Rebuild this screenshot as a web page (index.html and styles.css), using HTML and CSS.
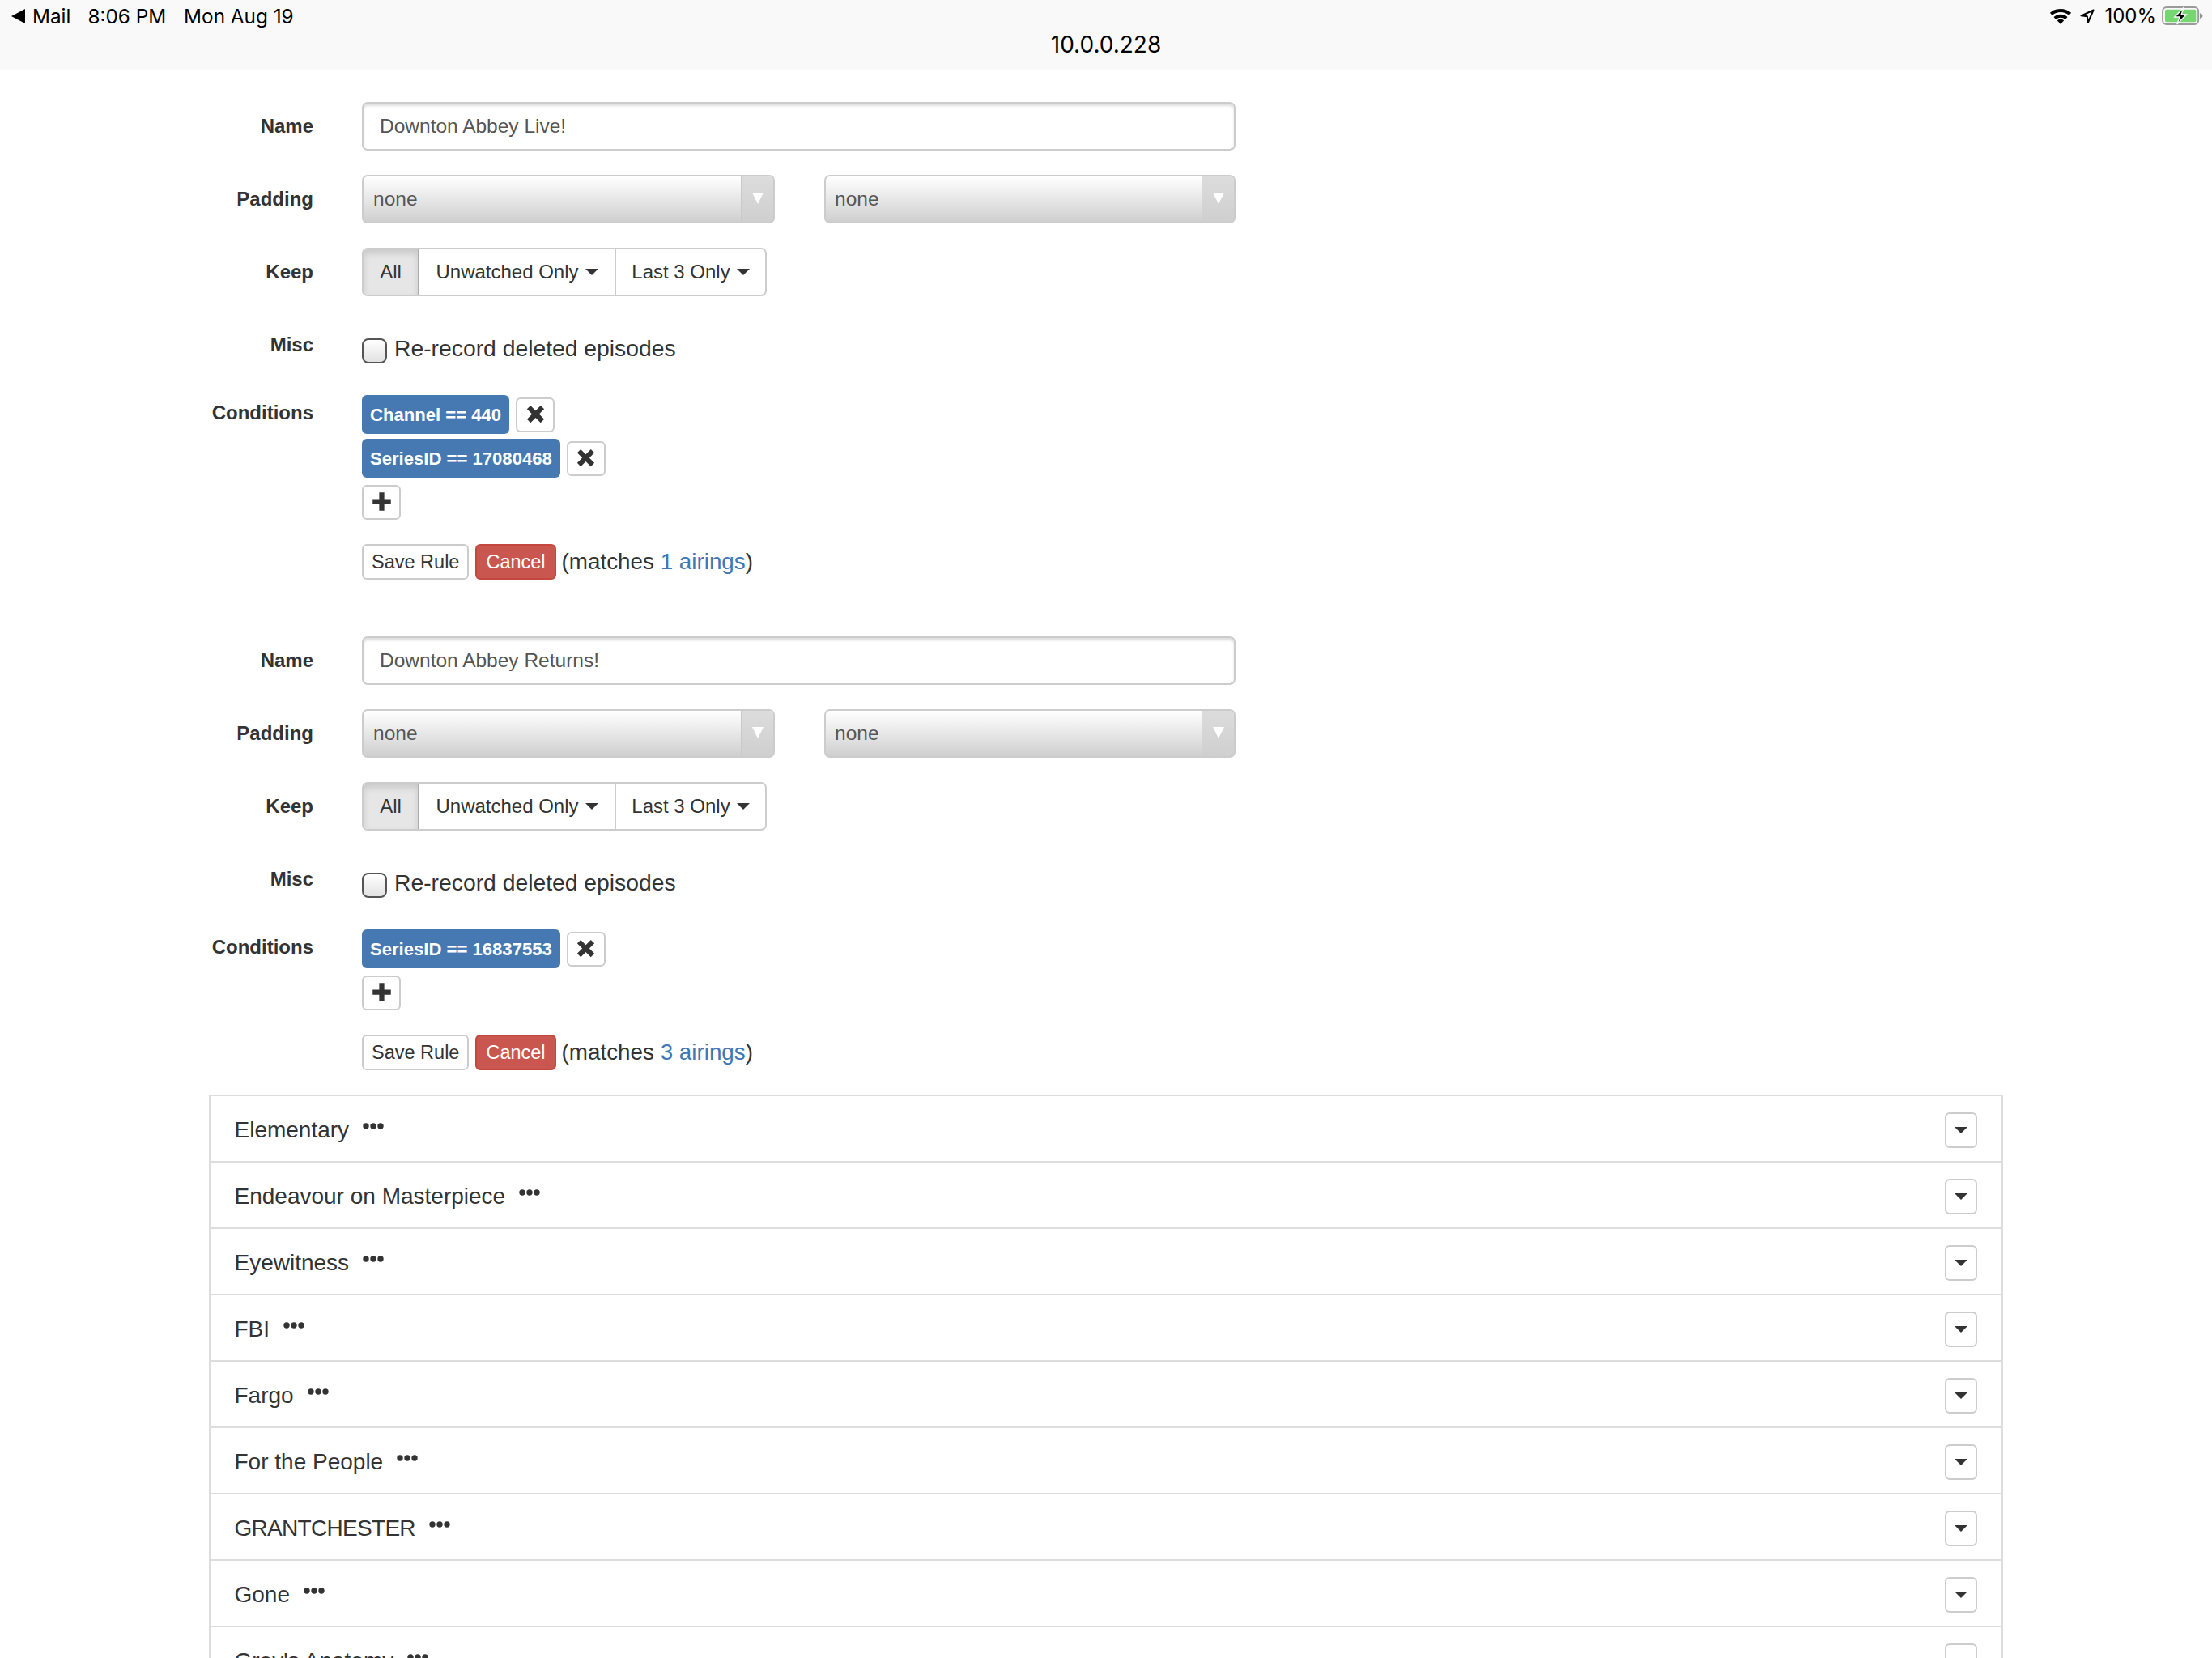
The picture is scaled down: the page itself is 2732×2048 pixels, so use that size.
FILE: index.html
```html
<!DOCTYPE html>
<html lang="en">
<head>
<meta charset="utf-8">
<title>10.0.0.228</title>
<link rel="stylesheet" href="styles.css">
</head>
<body>
<svg class="defs" aria-hidden="true">
  <symbol id="i-x" viewBox="0 0 20 20"><path d="M5 1.500 10 6.500 15 1.500 18.500 5 13.500 10 18.500 15 15 18.500 10 13.500 5 18.500 1.500 15 6.500 10 1.500 5Z"/></symbol>
  <symbol id="i-plus" viewBox="0 0 20 20"><path d="M7.500 1h5v6.500H19v5h-6.500V19h-5v-6.500H1v-5h6.500Z"/></symbol>
  <symbol id="i-dots" viewBox="0 0 26 8"><circle cx="4" cy="4" r="3.700"/><circle cx="13" cy="4" r="3.700"/><circle cx="22" cy="4" r="3.700"/></symbol>
</svg>
<header class="ios-bar">
  <div class="status">
    <div class="status-left">
      <svg class="back-tri" viewBox="0 0 17 18"><path d="M17 0V18L0 9Z"/></svg>
      <span class="mail">Mail</span>
      <span class="time">8:06 PM</span>
      <span>Mon Aug 19</span>
    </div>
    <div class="status-right">
      <svg class="wifi" viewBox="0 0 28 20"><path d="M14 20 9.800 15.200a6.500 6.500 0 0 1 8.400 0Z"/><path d="M6.800 12.500a11 11 0 0 1 14.400 0" class="arc"/><path d="M2.200 7.300a18 18 0 0 1 23.600 0" class="arc"/></svg>
      <svg class="loc" viewBox="0 0 18 18"><path d="M16.500 1.500 1.500 8.300 8.800 9.200 10 16.500Z"/></svg>
      <span class="pct">100%</span>
      <svg class="batt" viewBox="0 0 54 24"><rect x="1" y="1" width="46" height="22" rx="5" class="b-shell"/><rect x="4" y="4" width="40" height="16" rx="2" class="b-fill"/><path d="M49 8.500c2 .5 3.500 1.500 3.500 3.500s-1.500 3-3.500 3.500Z" class="b-nub"/><path d="M28.500 1 16.500 13.500H23L19.500 23 31.500 10.500H25Z" class="b-bolt"/></svg>
    </div>
  </div>
  <div class="address">10.0.0.228</div>
</header>
<main class="page">
  <form class="rule">
    <div class="group"><label class="lbl">Name</label><div class="field"><input class="text-input" type="text" value="Downton Abbey Live!"></div></div>
    <div class="group"><label class="lbl">Padding</label><div class="field selects">
      <div class="sel sel-a"><span>none</span><i class="sel-arrow"></i></div>
      <div class="sel sel-b"><span>none</span><i class="sel-arrow"></i></div>
    </div></div>
    <div class="group"><label class="lbl">Keep</label><div class="field">
      <div class="btn-group"><span class="seg seg-active">All</span><span class="seg seg-un">Unwatched Only<i class="caret"></i></span><span class="seg seg-last">Last 3 Only<i class="caret"></i></span></div>
    </div></div>
    <div class="group group-misc"><label class="lbl">Misc</label><div class="field misc"><span class="check"></span><span class="check-text">Re-record deleted episodes</span></div></div>
    <div class="group group-cond"><label class="lbl lbl-short">Conditions</label><div class="field cond">
      <div class="cond-row"><span class="chip">Channel == 440</span><span class="icon-btn"><svg class="gi"><use href="#i-x"/></svg></span></div>
      <div class="cond-row"><span class="chip">SeriesID == 17080468</span><span class="icon-btn"><svg class="gi"><use href="#i-x"/></svg></span></div>
      <div class="add-row"><span class="icon-btn"><svg class="gi"><use href="#i-plus"/></svg></span></div>
      <div class="actions"><span class="btn">Save Rule</span><span class="btn btn-danger">Cancel</span><span class="matches">(matches <a class="link">1 airings</a>)</span></div>
    </div></div>
  </form>
  <form class="rule rule-second">
    <div class="group"><label class="lbl">Name</label><div class="field"><input class="text-input" type="text" value="Downton Abbey Returns!"></div></div>
    <div class="group"><label class="lbl">Padding</label><div class="field selects">
      <div class="sel sel-a"><span>none</span><i class="sel-arrow"></i></div>
      <div class="sel sel-b"><span>none</span><i class="sel-arrow"></i></div>
    </div></div>
    <div class="group"><label class="lbl">Keep</label><div class="field">
      <div class="btn-group"><span class="seg seg-active">All</span><span class="seg seg-un">Unwatched Only<i class="caret"></i></span><span class="seg seg-last">Last 3 Only<i class="caret"></i></span></div>
    </div></div>
    <div class="group group-misc"><label class="lbl">Misc</label><div class="field misc"><span class="check"></span><span class="check-text">Re-record deleted episodes</span></div></div>
    <div class="group group-cond"><label class="lbl lbl-short">Conditions</label><div class="field cond">
      <div class="cond-row"><span class="chip">SeriesID == 16837553</span><span class="icon-btn"><svg class="gi"><use href="#i-x"/></svg></span></div>
      <div class="add-row"><span class="icon-btn"><svg class="gi"><use href="#i-plus"/></svg></span></div>
      <div class="actions"><span class="btn">Save Rule</span><span class="btn btn-danger">Cancel</span><span class="matches">(matches <a class="link">3 airings</a>)</span></div>
    </div></div>
  </form>
  <ul class="shows">
    <li class="show"><span>Elementary</span><svg class="dots"><use href="#i-dots"/></svg><span class="drop"><i class="caret caret-lg"></i></span></li>
    <li class="show"><span>Endeavour on Masterpiece</span><svg class="dots"><use href="#i-dots"/></svg><span class="drop"><i class="caret caret-lg"></i></span></li>
    <li class="show"><span>Eyewitness</span><svg class="dots"><use href="#i-dots"/></svg><span class="drop"><i class="caret caret-lg"></i></span></li>
    <li class="show"><span>FBI</span><svg class="dots"><use href="#i-dots"/></svg><span class="drop"><i class="caret caret-lg"></i></span></li>
    <li class="show"><span>Fargo</span><svg class="dots"><use href="#i-dots"/></svg><span class="drop"><i class="caret caret-lg"></i></span></li>
    <li class="show"><span>For the People</span><svg class="dots"><use href="#i-dots"/></svg><span class="drop"><i class="caret caret-lg"></i></span></li>
    <li class="show"><span class="caps">GRANTCHESTER</span><svg class="dots"><use href="#i-dots"/></svg><span class="drop"><i class="caret caret-lg"></i></span></li>
    <li class="show"><span>Gone</span><svg class="dots"><use href="#i-dots"/></svg><span class="drop"><i class="caret caret-lg"></i></span></li>
    <li class="show"><span>Grey's Anatomy</span><svg class="dots"><use href="#i-dots"/></svg><span class="drop"><i class="caret caret-lg"></i></span></li>
  </ul>
</main>
</body>
</html>
```
FILE: styles.css
```css
* { box-sizing: border-box; }
html, body { margin: 0; height: 2048px; overflow: hidden; background: #fff; }
body { font-family: "Liberation Sans", Arial, sans-serif; font-size: 24px; color: #333; }
.defs { display: none; }

.ios-bar { height: 87px; background: #f9f9f9; border-bottom: 1px solid #b9b9b9; color: #000; }
.status { height: 39px; display: flex; justify-content: space-between; align-items: center; padding: 0 10px 0 14px; font-family: Inter, "Liberation Sans", sans-serif; font-size: 24.300px; }
.status-left { display: flex; align-items: center; }
.back-tri { width: 17px; height: 18px; fill: #000; margin-right: 9px; }
.mail { margin-right: 21px; }
.time { margin-right: 22px; }
.status-right { display: flex; align-items: center; }
.wifi { width: 28px; height: 20px; margin-right: 10px; fill: #000; }
.wifi .arc { fill: none; stroke: #000; stroke-width: 4px; }
.loc { width: 18px; height: 18px; margin-right: 12px; fill: none; stroke: #000; stroke-width: 2px; stroke-linejoin: round; }
.pct { margin-right: 7px; font-size: 24px; }
.batt { width: 52px; height: 23px; }
.b-shell { fill: none; stroke: #9a9a9a; stroke-width: 2px; }
.b-fill { fill: #76d672; }
.b-nub { fill: #8e8e8e; }
.b-bolt { fill: #000; stroke: #f9f9f9; stroke-width: 1.500px; }
.address { text-align: center; font-size: 28px; line-height: 36px; margin-top: -2px; font-family: Inter, "Liberation Sans", sans-serif; }

.page { width: 2216px; margin: -1px 0 0 258px; border-top: 1px solid #999; padding-top: 39px; }
.rule-second { margin-top: 70px; }
.group { display: flex; margin-bottom: 30px; }
.group-cond { margin-bottom: 0; }
.group-misc { height: 62px; }
.lbl { width: 129px; margin-right: 60px; text-align: right; font-weight: 700; line-height: 60px; font-size: 24px; white-space: nowrap; flex: none; }
.lbl-short { line-height: 44px; }
.field { flex: none; width: 1079px; }

.text-input { display: block; width: 100%; height: 60px; padding: 0 20px; border: 2px solid #ccc; border-radius: 7px; font: 24.500px "Liberation Sans", Arial, sans-serif; color: #555; box-shadow: inset 0 3px 3px rgba(0,0,0,.13); outline: none; background: #fff; }

.selects { display: flex; justify-content: space-between; }
.sel { height: 60px; display: flex; align-items: center; justify-content: space-between; border: 2px solid #ccc; border-radius: 7px; background: linear-gradient(#fff, #cfcfcf); color: #555; font-size: 24.500px; padding-left: 12px; }
.sel-a { width: 510px; }
.sel-b { width: 508px; padding-left: 11px; }
.sel-arrow { width: 40px; align-self: stretch; display: flex; justify-content: center; align-items: center; border-left: 1px solid #c9c9c9; background: linear-gradient(#dcdcdc, #cfcfcf); border-radius: 0 5px 5px 0; padding-bottom: 3px; }
.sel-arrow::after { content: ""; border-left: 7px solid transparent; border-right: 7px solid transparent; border-top: 14px solid #fff; }

.btn-group { display: inline-flex; height: 60px; border: 2px solid #ccc; border-radius: 7px; font-size: 24px; overflow: hidden; }
.seg { display: flex; align-items: center; justify-content: center; border-left: 2px solid #ccc; }
.seg-active { width: 69px; border-left: 0; border-right: 2px solid #adadad; margin-right: -2px; background: #e6e6e6; box-shadow: inset 0 5px 8px rgba(0,0,0,.13); position: relative; }
.seg-un { width: 243px; }
.seg-last { width: 186px; }
.caret { width: 0; height: 0; margin-left: 8px; border-left: 8px solid transparent; border-right: 8px solid transparent; border-top: 8px solid #333; }

.misc { display: flex; align-items: flex-start; }
.check { width: 31px; height: 31px; margin-top: 22px; border: 2px solid #555; border-radius: 8px; background: linear-gradient(#fff, #e2e2e2); flex: none; }
.check-text { margin: 16px 0 0 9px; font-size: 28.300px; line-height: 36px; }

.cond-row { display: flex; align-items: center; gap: 8px; margin-bottom: 6px; }
.chip { height: 48px; padding: 1px 10px 0; display: flex; align-items: center; background: #4679b2; color: #fff; font-weight: 700; font-size: 22.100px; border-radius: 6px; white-space: nowrap; }
.icon-btn { width: 48px; height: 43px; display: flex; align-items: center; justify-content: center; border: 2px solid #ccc; border-radius: 6px; background: #fff; }
.gi { width: 25px; height: 25px; fill: #333; margin-bottom: 2px; }
.add-row { margin-top: 9px; display: flex; }
.actions { display: flex; align-items: center; gap: 7px; margin-top: 30px; }
.btn { height: 44px; display: flex; align-items: center; padding: 0 10px; border: 2px solid #ccc; border-radius: 6px; font-size: 23.500px; background: #fff; }
.btn-danger { padding: 0 11px; margin-left: 1px; background: #c9574f; border-color: #c4483f; color: #fff; }
.matches { font-size: 27.800px; }
.link { color: #3f78b5; }

.shows { list-style: none; margin: 30px 0 0; padding: 0; border: solid #ddd; border-width: 0 2px; }
.show { height: 82px; display: flex; align-items: center; padding: 3px 30px 0 29.500px; border-top: 2px solid #ddd; font-size: 28px; }
.caps { letter-spacing: -0.700px; }
.dots { width: 26px; height: 8px; margin: 0 0 10px 17px; fill: #333; }
.drop { margin-left: auto; width: 40px; height: 44px; display: flex; align-items: center; justify-content: center; border: 2px solid #ccc; border-radius: 6px; }
.caret-lg { margin-left: 0; }
```
